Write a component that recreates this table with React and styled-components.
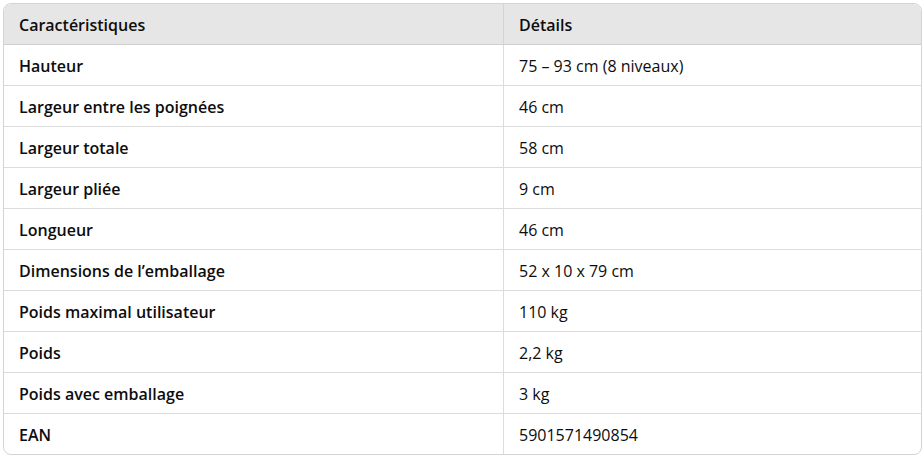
import React from "react";
import styled, { createGlobalStyle } from "styled-components";

const GlobalStyle = createGlobalStyle`
  html, body {
    margin: 0;
    background: #ffffff;
  }
  body {
    font-family: "Open Sans", "Liberation Sans", sans-serif;
  }
`;

const Page = styled.div`
  padding: 3px 1px 2px 3px;
`;

const Table = styled.table`
  width: 100%;
  border-collapse: separate;
  border-spacing: 0;
  border: 1px solid #d4d4d4;
  border-radius: 8px;
  overflow: hidden;
  font-size: 16px;
  color: #0d0d0d;
  table-layout: fixed;
`;

const Head = styled.th`
  background: #e6e6e6;
  text-align: left;
  font-weight: 600;
  height: 39px;
  padding: 1px 15px 0;
  border-bottom: 1px solid #cfcfcf;
  border-left: ${(p) => (p.$first ? "none" : "1px solid #d4d4d4")};
  width: ${(p) => (p.$first ? "469px" : "auto")};
`;

const Cell = styled.td`
  height: 39px;
  padding: 1px 15px 0;
  font-weight: ${(p) => (p.$label ? 600 : 400)};
  border-top: ${(p) => (p.$top ? "1px solid #dcdcdc" : "none")};
  border-left: ${(p) => (p.$label ? "none" : "1px solid #dcdcdc")};
`;

const rows = [
  ["Hauteur", "75 – 93 cm (8 niveaux)"],
  ["Largeur entre les poignées", "46 cm"],
  ["Largeur totale", "58 cm"],
  ["Largeur pliée", "9 cm"],
  ["Longueur", "46 cm"],
  ["Dimensions de l’emballage", "52 x 10 x 79 cm"],
  ["Poids maximal utilisateur", "110 kg"],
  ["Poids", "2,2 kg"],
  ["Poids avec emballage", "3 kg"],
  ["EAN", "5901571490854"],
];

export default function App() {
  return (
    <Page>
      <GlobalStyle />
      <Table>
        <thead>
          <tr>
            <Head $first>Caractéristiques</Head>
            <Head>Détails</Head>
          </tr>
        </thead>
        <tbody>
          {rows.map(([label, value], i) => (
            <tr key={label}>
              <Cell $label $top={i > 0}>
                {label}
              </Cell>
              <Cell $top={i > 0}>{value}</Cell>
            </tr>
          ))}
        </tbody>
      </Table>
    </Page>
  );
}
